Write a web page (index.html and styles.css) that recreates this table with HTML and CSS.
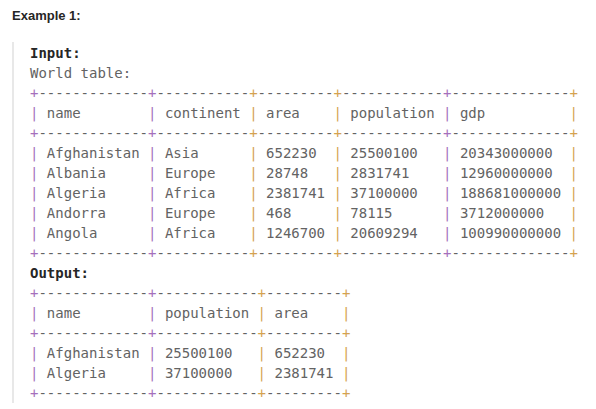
FILE: index.html
```html
<!DOCTYPE html>
<html lang="en">
<head>
<meta charset="utf-8">
<title>Example 1</title>
<link rel="stylesheet" href="styles.css">
</head>
<body>
<p class="title">Example 1:</p>
<pre class="example"><strong class="label">Input:</strong>
World table:
<span class="p">+</span>-------------<span class="p">+</span>-----------<span class="o">+</span>---------<span class="o">+</span>------------<span class="p">+</span>--------------<span class="o">+</span>
<span class="p">|</span> name        <span class="p">|</span> continent <span class="o">|</span> area    <span class="o">|</span> population <span class="p">|</span> gdp          <span class="o">|</span>
<span class="p">+</span>-------------<span class="p">+</span>-----------<span class="o">+</span>---------<span class="o">+</span>------------<span class="p">+</span>--------------<span class="o">+</span>
<span class="p">|</span> Afghanistan <span class="p">|</span> Asia      <span class="o">|</span> 652230  <span class="o">|</span> 25500100   <span class="p">|</span> 20343000000  <span class="o">|</span>
<span class="p">|</span> Albania     <span class="p">|</span> Europe    <span class="o">|</span> 28748   <span class="o">|</span> 2831741    <span class="p">|</span> 12960000000  <span class="o">|</span>
<span class="p">|</span> Algeria     <span class="p">|</span> Africa    <span class="o">|</span> 2381741 <span class="o">|</span> 37100000   <span class="p">|</span> 188681000000 <span class="o">|</span>
<span class="p">|</span> Andorra     <span class="p">|</span> Europe    <span class="o">|</span> 468     <span class="o">|</span> 78115      <span class="p">|</span> 3712000000   <span class="o">|</span>
<span class="p">|</span> Angola      <span class="p">|</span> Africa    <span class="o">|</span> 1246700 <span class="o">|</span> 20609294   <span class="p">|</span> 100990000000 <span class="o">|</span>
<span class="p">+</span>-------------<span class="p">+</span>-----------<span class="o">+</span>---------<span class="o">+</span>------------<span class="p">+</span>--------------<span class="o">+</span>
<strong class="label">Output:</strong>
<span class="p">+</span>-------------<span class="p">+</span>------------<span class="o">+</span>---------<span class="o">+</span>
<span class="p">|</span> name        <span class="p">|</span> population <span class="o">|</span> area    <span class="o">|</span>
<span class="p">+</span>-------------<span class="p">+</span>------------<span class="o">+</span>---------<span class="o">+</span>
<span class="p">|</span> Afghanistan <span class="p">|</span> 25500100   <span class="o">|</span> 652230  <span class="o">|</span>
<span class="p">|</span> Algeria     <span class="p">|</span> 37100000   <span class="o">|</span> 2381741 <span class="o">|</span>
<span class="p">+</span>-------------<span class="p">+</span>------------<span class="o">+</span>---------<span class="o">+</span></pre>
</body>
</html>
```
FILE: styles.css
```css
html, body {
  margin: 0;
  padding: 0;
  background: #ffffff;
}

body {
  padding: 6px 0 0 0;
}

.title {
  margin: 0 0 0 12px;
  font-family: "Liberation Sans", Arial, sans-serif;
  font-weight: bold;
  font-size: 13px;
  line-height: 20px;
  color: #262626;
}

.example {
  margin: 16px 0 0 12px;
  padding: 1px 0 0 16px;
  border-left: 2px solid #e8e8e8;
  font-family: "DejaVu Sans Mono", monospace;
  font-size: 14px;
  line-height: 20px;
  color: #636363;
  white-space: pre;
}

.label {
  color: #262626;
  font-weight: bold;
}

.p {
  color: #a56fbc;
}

.o {
  color: #d4a250;
}
```
